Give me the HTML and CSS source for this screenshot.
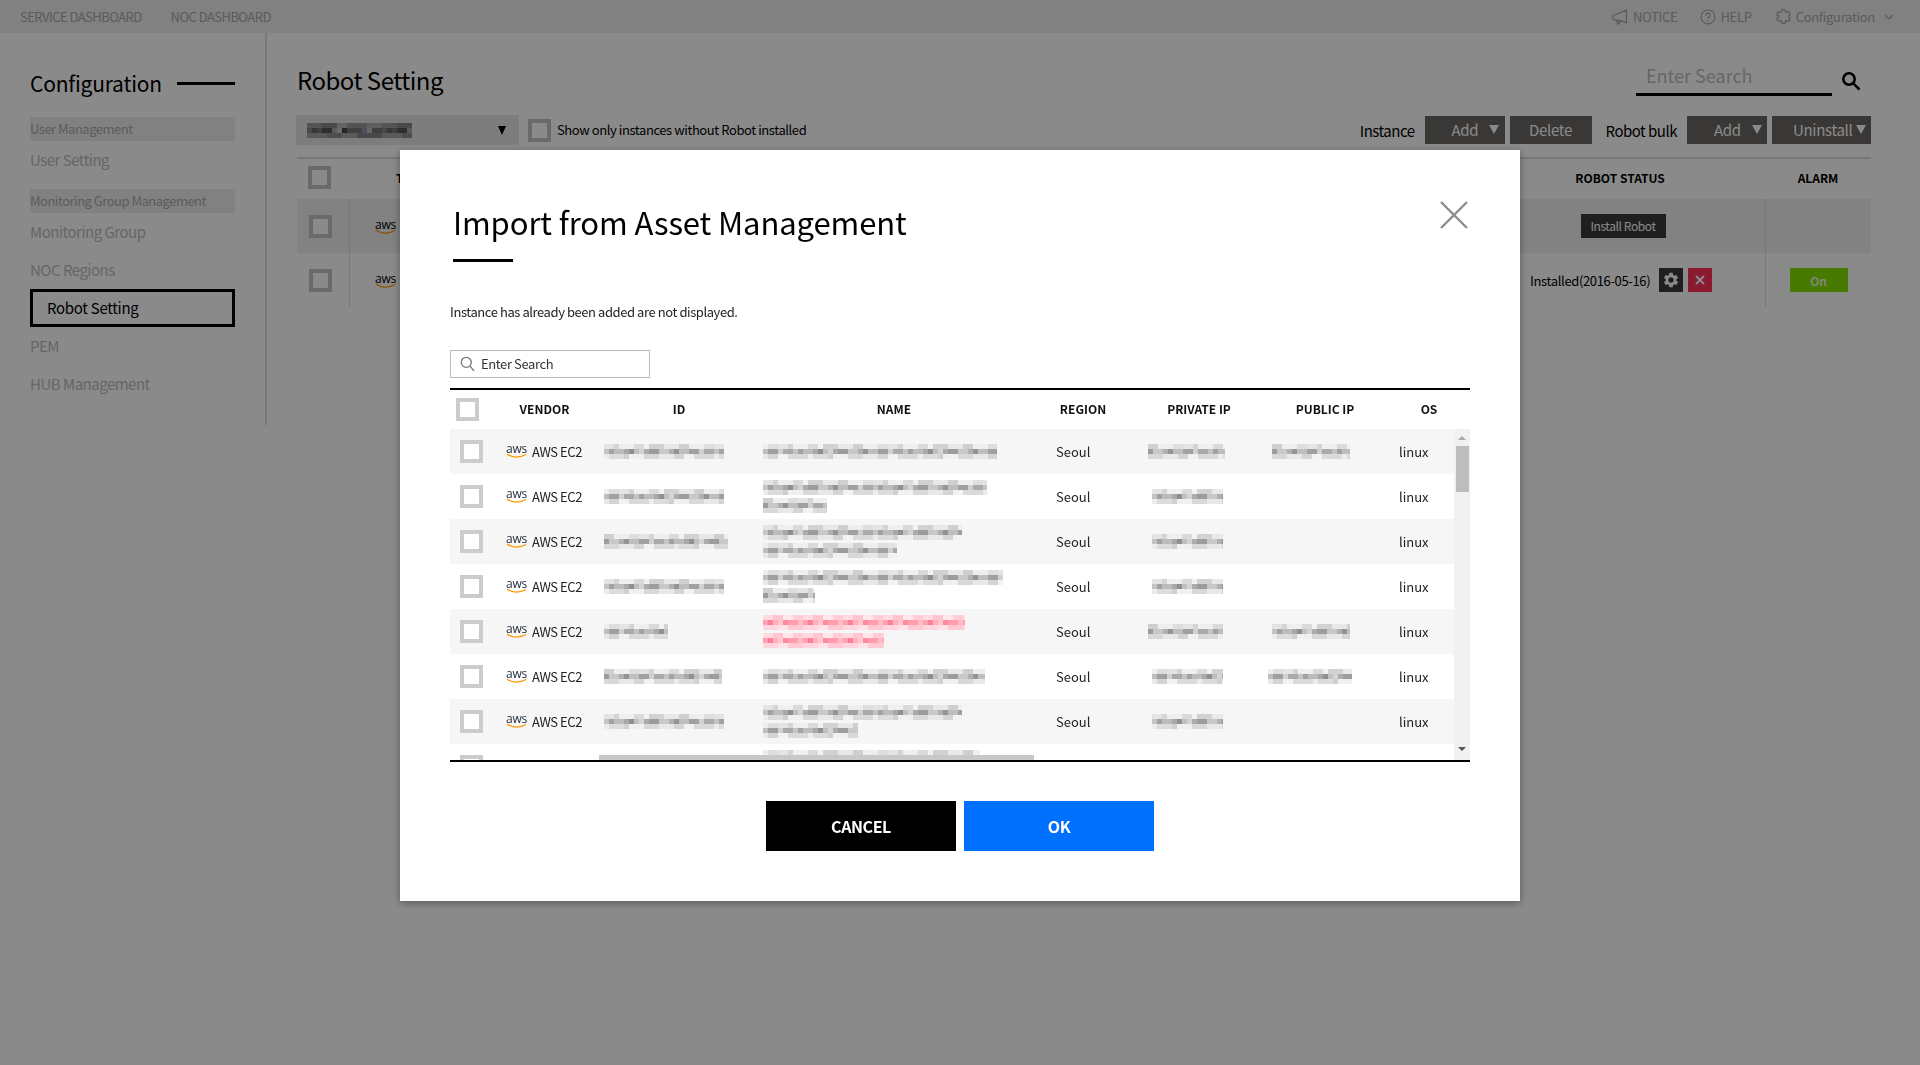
FILE: index.html
```html
<!DOCTYPE html>
<html lang="en">
<head>
    <meta charset="UTF-8">
    <meta name="viewport" content="width=device-width, initial-scale=1.0">
    <title>Robot Setting</title>
    <link rel="stylesheet" href="styles.css">
</head>
<body>
    <div class="topbar">
        <a class="toplink">SERVICE DASHBOARD</a>
        <a class="toplink">NOC DASHBOARD</a>
        <div class="topright">
            <a class="toplink">
                <svg width="17" height="16" viewBox="0 0 17 16" fill="none" stroke="currentColor" stroke-width="1.2"><path d="M1 6.5 14.5 1.2v12.6L7 11.2H3.2L1 10zM4.5 11.5l1 3.5h2.2l-.9-3.4"/></svg>
                NOTICE
            </a>
            <a class="toplink">
                <svg width="16" height="16" viewBox="0 0 16 16" fill="none" stroke="currentColor" stroke-width="1.1"><circle cx="8" cy="8" r="7"/><path d="M5.9 6.2c0-1.3 1-2.1 2.1-2.1s2.1.8 2.1 2c0 1.700-2.100 1.700-2.100 3.500M8 11v1.300"/></svg>
                HELP
            </a>
            <a class="toplink">
                <svg width="17" height="17" viewBox="0 0 24 24" fill="none" stroke="currentColor" stroke-width="1.8"><path d="M19.14 12.94c.04-.3.06-.61.06-.94 0-.32-.02-.64-.07-.94l2.03-1.58a.49.49 0 0 0 .12-.61l-1.92-3.32a.488.488 0 0 0-.59-.22l-2.39.96c-.5-.38-1.03-.7-1.62-.94l-.36-2.54a.484.484 0 0 0-.48-.41h-3.84c-.24 0-.43.17-.47.41l-.36 2.54c-.59.24-1.13.57-1.62.94l-2.39-.96c-.22-.08-.47 0-.59.22L2.74 8.87c-.12.21-.08.47.12.61l2.03 1.58c-.05.3-.09.63-.09.94s.02.64.07.94l-2.03 1.58a.49.49 0 0 0-.12.61l1.92 3.32c.12.22.37.29.59.22l2.39-.96c.5.38 1.03.7 1.62.94l.36 2.54c.05.24.24.41.48.41h3.84c.24 0 .44-.17.47-.41l.36-2.54c.59-.24 1.13-.56 1.62-.94l2.39.96c.22.08.47 0 .59-.22l1.92-3.32c.12-.22.07-.47-.12-.61l-2.010-1.58z"/></svg>
                <span class="toplabel">Configuration</span>
                <svg class="chevron" width="10" height="6" viewBox="0 0 10 6" fill="none" stroke="currentColor" stroke-width="1.2"><path d="M1 1l4 4 4-4"/></svg>
            </a>
        </div>
    </div>

    <div class="page">
        <div class="sidebar">
            <div class="side-title"><span>Configuration</span><i></i></div>
            <div class="side-group">User Management</div>
            <a class="side-item">User Setting</a>
            <div class="side-group side-group-next">Monitoring Group Management</div>
            <a class="side-item">Monitoring Group</a>
            <a class="side-item">NOC Regions</a>
            <a class="side-item side-active">Robot Setting</a>
            <a class="side-item">PEM</a>
            <a class="side-item">HUB Management</a>
        </div>

        <div class="main">
            <div class="main-head">
                <h1>Robot Setting</h1>
                <div class="main-search">
                    <span class="main-search-input">Enter Search</span>
                    <svg width="20" height="20" viewBox="0 0 20 20" fill="none" stroke="#000" stroke-width="2.6"><circle cx="8" cy="8" r="5.700"/><path d="M12.300 12.300 18.500 18.500"/></svg>
                </div>
            </div>

            <div class="toolbar">
                <div class="select"><span class="mosaic mosaic-dim" style="width:105px"></span><b class="arrow-dark"></b></div>
                <span class="check check-dim"></span>
                <span class="only-label">Show only instances without Robot installed</span>
                <div class="toolbar-right">
                    <span class="tool-label">Instance</span>
                    <button class="tool-btn tool-add">Add<b class="arrow"></b></button>
                    <button class="tool-btn tool-delete">Delete</button>
                    <span class="tool-label tool-label-bulk">Robot bulk</span>
                    <button class="tool-btn tool-add">Add<b class="arrow"></b></button>
                    <button class="tool-btn tool-uninstall">Uninstall<b class="arrow"></b></button>
                </div>
            </div>

            <div class="bg-table">
                <div class="bg-row bg-head">
                    <div class="bg-check"><span class="check check-dim"></span></div>
                    <div class="bg-type">TYPE</div>
                    <div class="bg-status">ROBOT STATUS</div>
                    <div class="bg-alarm">ALARM</div>
                </div>
                <div class="bg-row bg-shade">
                    <div class="bg-check"><span class="check check-dim"></span></div>
                    <div class="bg-type bg-line"><span class="aws">aws<svg width="21" height="6" viewBox="0 0 21 6" fill="none" stroke="#ff9900" stroke-width="1.300"><path d="M1 1c5 4 13 4 19 .5"/></svg></span></div>
                    <div class="bg-status"><button class="install-btn">Install Robot</button></div>
                    <div class="bg-alarm bg-line"></div>
                </div>
                <div class="bg-row">
                    <div class="bg-check"><span class="check check-dim"></span></div>
                    <div class="bg-type bg-line"><span class="aws">aws<svg width="21" height="6" viewBox="0 0 21 6" fill="none" stroke="#ff9900" stroke-width="1.300"><path d="M1 1c5 4 13 4 19 .5"/></svg></span></div>
                    <div class="bg-status bg-installed">
                        <span>Installed(2016-05-16)</span>
                        <button class="icon-btn icon-gear">
                            <svg width="18" height="18" viewBox="0 0 24 24" fill="#fff"><path d="M19.14 12.94c.04-.3.06-.61.06-.94 0-.32-.02-.64-.07-.94l2.03-1.58a.49.49 0 0 0 .12-.61l-1.92-3.32a.488.488 0 0 0-.59-.22l-2.39.96c-.5-.38-1.03-.7-1.62-.94l-.36-2.54a.484.484 0 0 0-.48-.41h-3.84c-.24 0-.43.17-.47.41l-.36 2.54c-.59.24-1.13.57-1.62.94l-2.39-.96c-.22-.08-.47 0-.59.22L2.74 8.87c-.12.21-.08.47.12.61l2.03 1.58c-.05.3-.09.63-.09.94s.02.64.07.94l-2.03 1.58a.49.49 0 0 0-.12.61l1.92 3.32c.12.22.37.29.59.22l2.39-.96c.5.38 1.03.7 1.62.94l.36 2.54c.05.24.24.41.48.41h3.84c.24 0 .44-.17.47-.41l.36-2.54c.59-.24 1.13-.56 1.62-.94l2.39.96c.22.08.47 0 .59-.22l1.92-3.32c.12-.22.07-.47-.12-.61l-2.010-1.58zM12 15.600c-1.980 0-3.600-1.620-3.600-3.600s1.620-3.600 3.600-3.600 3.600 1.620 3.600 3.600-1.620 3.600-3.600 3.600z"/></svg>
                        </button>
                        <button class="icon-btn icon-del">
                            <svg width="12" height="12" viewBox="0 0 12 12" stroke="#fff" stroke-width="2"><path d="M2 2l8 8M10 2l-8 8"/></svg>
                        </button>
                    </div>
                    <div class="bg-alarm bg-line"><button class="on-btn">On</button></div>
                </div>
            </div>
        </div>
    </div>

    <div class="dim"></div>

    <div class="modal">
        <a class="modal-close">
            <svg width="28" height="28" viewBox="0 0 28 28" stroke="#8c8c8c" stroke-width="2.400"><path d="M1 1l26 26M27 1 1 27"/></svg>
        </a>
        <h2 class="modal-title">Import from Asset Management</h2>
        <div class="modal-rule"></div>
        <p class="modal-note">Instance has already been added are not displayed.</p>
        <div class="modal-search">
            <svg width="15" height="16" viewBox="0 0 15 16" fill="none" stroke="#777" stroke-width="1.300"><circle cx="6.300" cy="6.300" r="5"/><path d="M10 10.200 14 15"/></svg>
            <span>Enter Search</span>
        </div>

        <div class="grid-wrap">
            <div class="cols grid-head">
                <div><span class="check"></span></div>
                <div class="th th-vendor">VENDOR</div>
                <div class="th">ID</div>
                <div class="th">NAME</div>
                <div class="th">REGION</div>
                <div class="th">PRIVATE IP</div>
                <div class="th">PUBLIC IP</div>
                <div class="th">OS</div>
            </div>
            <div class="grid-body">
                <div class="grid-rows">
                    <div class="cols row">
                        <div class="c-check"><span class="check"></span></div>
                        <div class="c-vendor"><span class="aws aws-light">aws<svg width="21" height="6" viewBox="0 0 21 6" fill="none" stroke="#ff9900" stroke-width="1.300"><path d="M1 1c5 4 13 4 19 .5"/></svg></span>AWS EC2</div>
                        <div class="c-id"><span class="mosaic" style="width:120px"></span></div>
                        <div class="c-name"><span class="mosaic mosaic-b" style="width:234px"></span></div>
                        <div class="c-region">Seoul</div>
                        <div class="c-ip"><span class="mosaic mosaic-c" style="width:77px"></span></div>
                        <div class="c-pub"><span class="mosaic mosaic-c" style="width:78px"></span></div>
                        <div class="c-os">linux</div>
                    </div>
                    <div class="cols row">
                        <div class="c-check"><span class="check"></span></div>
                        <div class="c-vendor"><span class="aws aws-light">aws<svg width="21" height="6" viewBox="0 0 21 6" fill="none" stroke="#ff9900" stroke-width="1.300"><path d="M1 1c5 4 13 4 19 .5"/></svg></span>AWS EC2</div>
                        <div class="c-id"><span class="mosaic mosaic-b" style="width:120px"></span></div>
                        <div class="c-name"><span class="mosaic" style="width:224px"></span><span class="mosaic mosaic-c" style="width:64px"></span></div>
                        <div class="c-region">Seoul</div>
                        <div class="c-ip c-ip-in"><span class="mosaic" style="width:71px"></span></div>
                        <div class="c-pub"></div>
                        <div class="c-os">linux</div>
                    </div>
                    <div class="cols row">
                        <div class="c-check"><span class="check"></span></div>
                        <div class="c-vendor"><span class="aws aws-light">aws<svg width="21" height="6" viewBox="0 0 21 6" fill="none" stroke="#ff9900" stroke-width="1.300"><path d="M1 1c5 4 13 4 19 .5"/></svg></span>AWS EC2</div>
                        <div class="c-id"><span class="mosaic mosaic-c" style="width:124px"></span></div>
                        <div class="c-name"><span class="mosaic" style="width:199px"></span><span class="mosaic mosaic-b" style="width:134px"></span></div>
                        <div class="c-region">Seoul</div>
                        <div class="c-ip c-ip-in"><span class="mosaic" style="width:71px"></span></div>
                        <div class="c-pub"></div>
                        <div class="c-os">linux</div>
                    </div>
                    <div class="cols row">
                        <div class="c-check"><span class="check"></span></div>
                        <div class="c-vendor"><span class="aws aws-light">aws<svg width="21" height="6" viewBox="0 0 21 6" fill="none" stroke="#ff9900" stroke-width="1.300"><path d="M1 1c5 4 13 4 19 .5"/></svg></span>AWS EC2</div>
                        <div class="c-id"><span class="mosaic" style="width:120px"></span></div>
                        <div class="c-name"><span class="mosaic mosaic-b" style="width:240px"></span><span class="mosaic mosaic-c" style="width:52px"></span></div>
                        <div class="c-region">Seoul</div>
                        <div class="c-ip c-ip-in"><span class="mosaic" style="width:71px"></span></div>
                        <div class="c-pub"></div>
                        <div class="c-os">linux</div>
                    </div>
                    <div class="cols row">
                        <div class="c-check"><span class="check"></span></div>
                        <div class="c-vendor"><span class="aws aws-light">aws<svg width="21" height="6" viewBox="0 0 21 6" fill="none" stroke="#ff9900" stroke-width="1.300"><path d="M1 1c5 4 13 4 19 .5"/></svg></span>AWS EC2</div>
                        <div class="c-id"><span class="mosaic mosaic-b" style="width:64px"></span></div>
                        <div class="c-name"><span class="mosaic mosaic-pink" style="width:202px"></span><span class="mosaic mosaic-pink" style="width:121px"></span></div>
                        <div class="c-region">Seoul</div>
                        <div class="c-ip"><span class="mosaic mosaic-c" style="width:75px"></span></div>
                        <div class="c-pub"><span class="mosaic" style="width:78px"></span></div>
                        <div class="c-os">linux</div>
                    </div>
                    <div class="cols row">
                        <div class="c-check"><span class="check"></span></div>
                        <div class="c-vendor"><span class="aws aws-light">aws<svg width="21" height="6" viewBox="0 0 21 6" fill="none" stroke="#ff9900" stroke-width="1.300"><path d="M1 1c5 4 13 4 19 .5"/></svg></span>AWS EC2</div>
                        <div class="c-id"><span class="mosaic mosaic-c" style="width:118px"></span></div>
                        <div class="c-name"><span class="mosaic mosaic-b" style="width:222px"></span></div>
                        <div class="c-region">Seoul</div>
                        <div class="c-ip c-ip-in"><span class="mosaic mosaic-b" style="width:71px"></span></div>
                        <div class="c-pub c-pub-wide"><span class="mosaic mosaic-b" style="width:84px"></span></div>
                        <div class="c-os">linux</div>
                    </div>
                    <div class="cols row">
                        <div class="c-check"><span class="check"></span></div>
                        <div class="c-vendor"><span class="aws aws-light">aws<svg width="21" height="6" viewBox="0 0 21 6" fill="none" stroke="#ff9900" stroke-width="1.300"><path d="M1 1c5 4 13 4 19 .5"/></svg></span>AWS EC2</div>
                        <div class="c-id"><span class="mosaic" style="width:120px"></span></div>
                        <div class="c-name"><span class="mosaic" style="width:199px"></span><span class="mosaic mosaic-b" style="width:95px"></span></div>
                        <div class="c-region">Seoul</div>
                        <div class="c-ip c-ip-in"><span class="mosaic" style="width:71px"></span></div>
                        <div class="c-pub"></div>
                        <div class="c-os">linux</div>
                    </div>
                    <div class="cols row">
                        <div class="c-check"><span class="check"></span></div>
                        <div class="c-vendor"></div>
                        <div class="c-id"></div>
                        <div class="c-name"><span class="mosaic mosaic-b" style="width:217px"></span><span class="mosaic" style="width:100px"></span></div>
                        <div class="c-region"></div>
                        <div class="c-ip"></div>
                        <div class="c-pub"></div>
                        <div class="c-os"></div>
                    </div>
                    <div class="hbar"></div>
                </div>
                <div class="vbar">
                    <b class="vbar-up"></b>
                    <i class="vbar-thumb"></i>
                    <b class="vbar-down"></b>
                </div>
            </div>
        </div>

        <div class="modal-actions">
            <button class="btn-cancel">CANCEL</button>
            <button class="btn-ok">OK</button>
        </div>
    </div>
</body>
</html>
```

FILE: styles.css
```css
*{
    margin: 0;
    padding: 0;
    box-sizing: border-box;
}
body{
    font-family: "Noto Sans CJK KR", "Noto Sans", sans-serif;
    font-size: 13px;
    color: #000;
    background: #fff;
    height: 1065px;
    overflow: hidden;
}
button{
    font-family: inherit;
    border: 0;
}

/* top bar */
.topbar{
    height: 33px;
    background: #eee;
    display: flex;
    align-items: center;
    padding-left: 20px;
    gap: 29px;
}
.toplink{
    font-size: 13px;
    letter-spacing: -0.55px;
    color: #a8a8a8;
    display: flex;
    align-items: center;
    gap: 4px;
}
.topright{
    margin-left: auto;
    display: flex;
    align-items: center;
    gap: 23px;
    padding-right: 26px;
}
.topright .toplink{
    letter-spacing: -0.3px;
}
.chevron{
    margin-left: 5px;
}

/* sidebar */
.page{
    display: flex;
    align-items: flex-start;
}
.sidebar{
    width: 267px;
    height: 392px;
    flex: none;
    border-right: 2px solid #dedede;
    padding: 34px 30px 0 30px;
}
.side-title{
    display: flex;
    align-items: center;
    gap: 15px;
    height: 32px;
    font-size: 21px;
    margin-bottom: 18px;
    letter-spacing: -0.2px;
}
.side-title i{
    flex: 1;
    height: 3px;
    background: #000;
}
.side-group{
    height: 24px;
    line-height: 24px;
    background: #eee;
    color: #ababab;
    font-size: 13px;
    letter-spacing: -0.5px;
}
.side-group-next{
    margin-top: 10px;
}
.side-item{
    display: block;
    height: 38px;
    line-height: 38px;
    font-size: 15px;
    letter-spacing: -0.5px;
    color: #bcbcbc;
}
.side-active{
    border: 3px solid #000;
    color: #000;
    line-height: 32px;
    padding-left: 14px;
    letter-spacing: -0.3px;
}

/* main */
.main{
    flex: 1;
    padding: 0 49px 0 30px;
}
.main-head{
    display: flex;
    justify-content: space-between;
    height: 82px;
}
.main-head h1{
    font-size: 24px;
    font-weight: 400;
    line-height: 47px;
    padding-top: 23px;
    letter-spacing: -0.5px;
}
.main-search{
    display: flex;
    gap: 9px;
    margin-top: 27px;
    padding-right: 10px;
    align-items: flex-end;
    height: 36px;
}
.main-search svg{
    margin-bottom: 5px;
}
.main-search-input{
    width: 196px;
    height: 36px;
    line-height: 30px;
    padding-left: 10px;
    border-bottom: 3px solid #000;
    font-size: 18px;
    color: #bcbcbc;
}
.toolbar{
    display: flex;
    align-items: center;
    height: 30px;
}
.select{
    width: 223px;
    height: 30px;
    margin-left: -1px;
    background: #e8e8e8;
    display: flex;
    align-items: center;
    justify-content: space-between;
    padding: 0 13px 0 11px;
}
.arrow-dark{
    border-style: solid;
    border-width: 9px 4.5px 0;
    border-color: #000 transparent transparent;
}
.arrow{
    display: inline-block;
    border-style: solid;
    border-width: 9px 5px 0;
    border-color: #fff transparent transparent;
}
.check{
    display: block;
    width: 23px;
    height: 23px;
    border: 4px solid #ccc;
    background: #fff;
}
.check-dim{
    border-color: #c4c4c4;
}
.toolbar .check{
    margin-left: 9px;
}
.only-label{
    margin-left: 6px;
    padding-bottom: 1px;
    letter-spacing: -0.42px;
}
.toolbar-right{
    margin-left: auto;
    display: flex;
    align-items: center;
}
.tool-label{
    font-size: 15px;
    letter-spacing: -0.5px;
    margin-right: 10px;
}
.tool-label-bulk{
    margin-left: 14px;
}
.tool-btn{
    height: 28px;
    background: #6b6864;
    color: #fff;
    font-size: 15px;
    letter-spacing: -0.3px;
    display: flex;
    align-items: center;
    padding-bottom: 1px;
}
.tool-add{
    width: 80px;
    padding-left: 27px;
    gap: 11px;
    margin-right: 5px;
}
.tool-delete{
    width: 82px;
    justify-content: center;
}
.tool-uninstall{
    width: 99px;
    padding-left: 21px;
    gap: 3px;
}

/* table behind the dialog */
.bg-table{
    margin-top: 12px;
    border-top: 2px solid #dedede;
}
.bg-row{
    display: flex;
    height: 54px;
    align-items: stretch;
}
.bg-head{
    height: 40px;
    font-weight: 700;
    font-size: 12px;
}
.bg-shade{
    background: #f0f0f0;
}
.bg-check{
    width: 52px;
    display: flex;
    align-items: center;
    padding-left: 12px;
}
.bg-head .bg-check{
    padding-left: 11px;
}
.bg-type{
    flex: 1;
    padding-left: 25px;
    display: flex;
    align-items: center;
}
.bg-line{
    border-left: 1px solid #dedede;
}
.bg-head .bg-type{
    padding-left: 47px;
}
.bg-status{
    width: 290px;
    display: flex;
    align-items: center;
    justify-content: center;
}
.bg-alarm{
    width: 106px;
    display: flex;
    align-items: center;
    justify-content: center;
}
.bg-head > div{
    padding-bottom: 3px;
}
.bg-installed{
    justify-content: flex-start;
    padding-left: 55px;
    letter-spacing: -0.35px;
}
.aws{
    display: block;
    font-family: "Open Sans", sans-serif;
    font-size: 12px;
    line-height: 13px;
    color: #000;
    width: 21px;
    text-align: center;
    letter-spacing: -0.2px;
}
.aws svg{
    display: block;
    margin-top: -2px;
}
.aws-light{
    color: #232f3e;
    margin-right: 5px;
    margin-left: -1px;
    margin-top: -3px;
    flex: none;
}
.install-btn{
    width: 85px;
    height: 24px;
    padding-bottom: 2px;
    background: #3a3a3a;
    color: #fff;
    font-size: 12px;
    letter-spacing: -0.4px;
    margin-left: 6px;
}
.icon-btn{
    width: 24px;
    height: 24px;
    display: flex;
    align-items: center;
    justify-content: center;
}
.icon-gear{
    background: #3a3a3a;
    margin-left: 9px;
}
.icon-del{
    background: #ff3059;
    margin-left: 5px;
}
.on-btn{
    width: 58px;
    height: 24px;
    background: #82e200;
    color: #fff;
    font-size: 12px;
    font-weight: 500;
}

/* dialog */
.dim{
    position: fixed;
    inset: 0;
    background: rgba(0,0,0,.46);
}
.modal{
    position: fixed;
    left: 400px;
    top: 150px;
    width: 1120px;
    height: 751px;
    background: #fff;
    box-shadow: 0 2px 8px rgba(0,0,0,.35);
    padding: 49px 50px 0 50px;
}
.modal-close{
    position: absolute;
    left: 1040px;
    top: 51px;
}
.modal-title{
    font-size: 31px;
    font-weight: 400;
    line-height: 46px;
    padding-left: 3px;
    letter-spacing: -0.1px;
}
.modal-rule{
    width: 60px;
    height: 3px;
    background: #000;
    margin: 14px 0 0 3px;
}
.modal-note{
    margin-top: 40px;
    line-height: 20px;
    letter-spacing: -0.43px;
    color: #222;
}
.modal-search{
    width: 200px;
    height: 28px;
    margin-top: 28px;
    border: 1px solid #bbb;
    display: flex;
    align-items: center;
    padding-left: 9px;
    gap: 6px;
    color: #333;
    letter-spacing: -0.4px;
}
.modal-search span{
    padding-bottom: 2px;
}

/* asset grid */
.grid-wrap{
    margin-top: 10px;
    border-top: 2px solid #000;
    border-bottom: 2px solid #000;
}
.cols{
    display: grid;
    grid-template-columns: 50px 100px 158px 272px 106px 126px 126px 1fr;
    align-items: center;
}
.grid-head{
    height: 39px;
}
.grid-head .check{
    margin-left: 6px;
}
.th{
    text-align: center;
    font-weight: 700;
    font-size: 12px;
    color: #111;
    padding-bottom: 3px;
}
.th-vendor{
    padding-right: 11px;
}
.grid-body{
    display: flex;
    height: 331px;
}
.grid-rows{
    flex: 1;
    overflow: hidden;
    position: relative;
}
.row{
    height: 45px;
    color: #222;
}
.row:nth-child(odd){
    background: #f6f6f6;
}
.c-check{
    padding-left: 10px;
}
.c-vendor{
    display: flex;
    align-items: center;
    padding-left: 7px;
    letter-spacing: -0.45px;
}
.c-id{
    padding-left: 4px;
}
.c-name{
    padding-left: 5px;
    display: flex;
    flex-direction: column;
    gap: 3px;
}
.c-region{
    padding-left: 26px;
}
.c-ip{
    padding-left: 12px;
}
.c-ip-in{
    padding-left: 16px;
}
.c-pub{
    padding-left: 10px;
}
.c-pub-wide{
    padding-left: 6px;
}
.c-os{
    padding-left: 11px;
}
.hbar{
    position: absolute;
    left: 149px;
    bottom: 0;
    width: 435px;
    height: 5px;
    background: #c8c8c8;
}
.vbar{
    width: 16px;
    background: #f1f1f1;
    display: flex;
    flex-direction: column;
    align-items: center;
}
.vbar-up{
    margin-top: 7px;
    border-style: solid;
    border-width: 0 4px 4px;
    border-color: transparent transparent #aaa;
}
.vbar-thumb{
    width: 13px;
    height: 46px;
    margin-top: 6px;
    background: #bdbdbd;
}
.vbar-down{
    margin-top: auto;
    margin-bottom: 9px;
    border-style: solid;
    border-width: 4px 4px 0;
    border-color: #555 transparent transparent;
}

/* pixelated strings: three rows of 5px cells */
.mosaic{
    display: block;
    height: 15px;
    background-repeat: repeat-x;
    background-size: 110px 5px;
    background-position: 0 0, 0 10px, 0 5px;
    background-image:
        linear-gradient(90deg, #e4e4e4 0 10px, #d4d4d4 10px 15px, #efefef 15px 30px, #dadada 30px 40px, #f2f2f2 40px 45px, #d2d2d2 45px 60px, #e8e8e8 60px 75px, #cfcfcf 75px 85px, #eee 85px 100px, #dedede 100px 110px),
        linear-gradient(90deg, #ececec 0 5px, #dcdcdc 5px 20px, #d0d0d0 20px 25px, #f0f0f0 25px 40px, #d8d8d8 40px 55px, #e8e8e8 55px 70px, #d4d4d4 70px 80px, #f2f2f2 80px 90px, #dadada 90px 110px),
        linear-gradient(90deg, #c4c4c4 0 5px, #a2a2a2 5px 10px, #bcbcbc 10px 20px, #a8a8a8 20px 25px, #8f8f8f 25px 30px, #c0c0c0 30px 35px, #d4d4d4 35px 40px, #acacac 40px 45px, #9c9c9c 45px 55px, #c8c8c8 55px 65px, #b0b0b0 65px 70px, #949494 70px 75px, #bebebe 75px 85px, #a0a0a0 85px 95px, #d0d0d0 95px 100px, #aaa 100px 110px);
}
.mosaic-b{
    background-position: 15px 0, 45px 10px, 30px 5px;
}
.mosaic-c{
    background-position: 35px 0, 70px 10px, 60px 5px;
}
.mosaic-dim{
    background-size: 75px 5px;
    background-image:
        linear-gradient(90deg, #9c9c9c 0 15px, #8a8a8a 15px 30px, #bbb 30px 40px, #999 40px 60px, #b0b0b0 60px 75px),
        linear-gradient(90deg, #a4a4a4 0 20px, #909090 20px 35px, #a8a8a8 35px 50px, #888 50px 75px),
        linear-gradient(90deg, #888 0 5px, #666 5px 10px, #777 10px 15px, #555 15px 25px, #aaa 25px 30px, #c4c4c4 30px 35px, #444 35px 40px, #777 40px 55px, #8c96a8 55px 60px, #bbb 60px 65px, #777 65px 75px);
}
.mosaic-pink{
    background-size: 40px 5px;
    background-image:
        linear-gradient(90deg, #ffdbe1 0 10px, #ffc4ce 10px 20px, #ffe6ea 20px 30px, #ffccd5 30px 40px),
        linear-gradient(90deg, #ffd6dd 0 15px, #ffe2e7 15px 25px, #ffc8d2 25px 40px),
        linear-gradient(90deg, #ffa0b0 0 5px, #ff7f96 5px 10px, #ffb0be 10px 15px, #ffc8d2 15px 20px, #ff8aa0 20px 25px, #ff9cae 25px 35px, #ffbcc8 35px 40px);
}

.modal-actions{
    display: flex;
    justify-content: center;
    gap: 8px;
    margin-top: 39px;
}
.modal-actions button{
    width: 190px;
    height: 50px;
    color: #fff;
    font-size: 16px;
    font-weight: 700;
    letter-spacing: -0.4px;
}
.btn-cancel{
    background: #000;
}
.btn-ok{
    background: #0070ff;
}
```
